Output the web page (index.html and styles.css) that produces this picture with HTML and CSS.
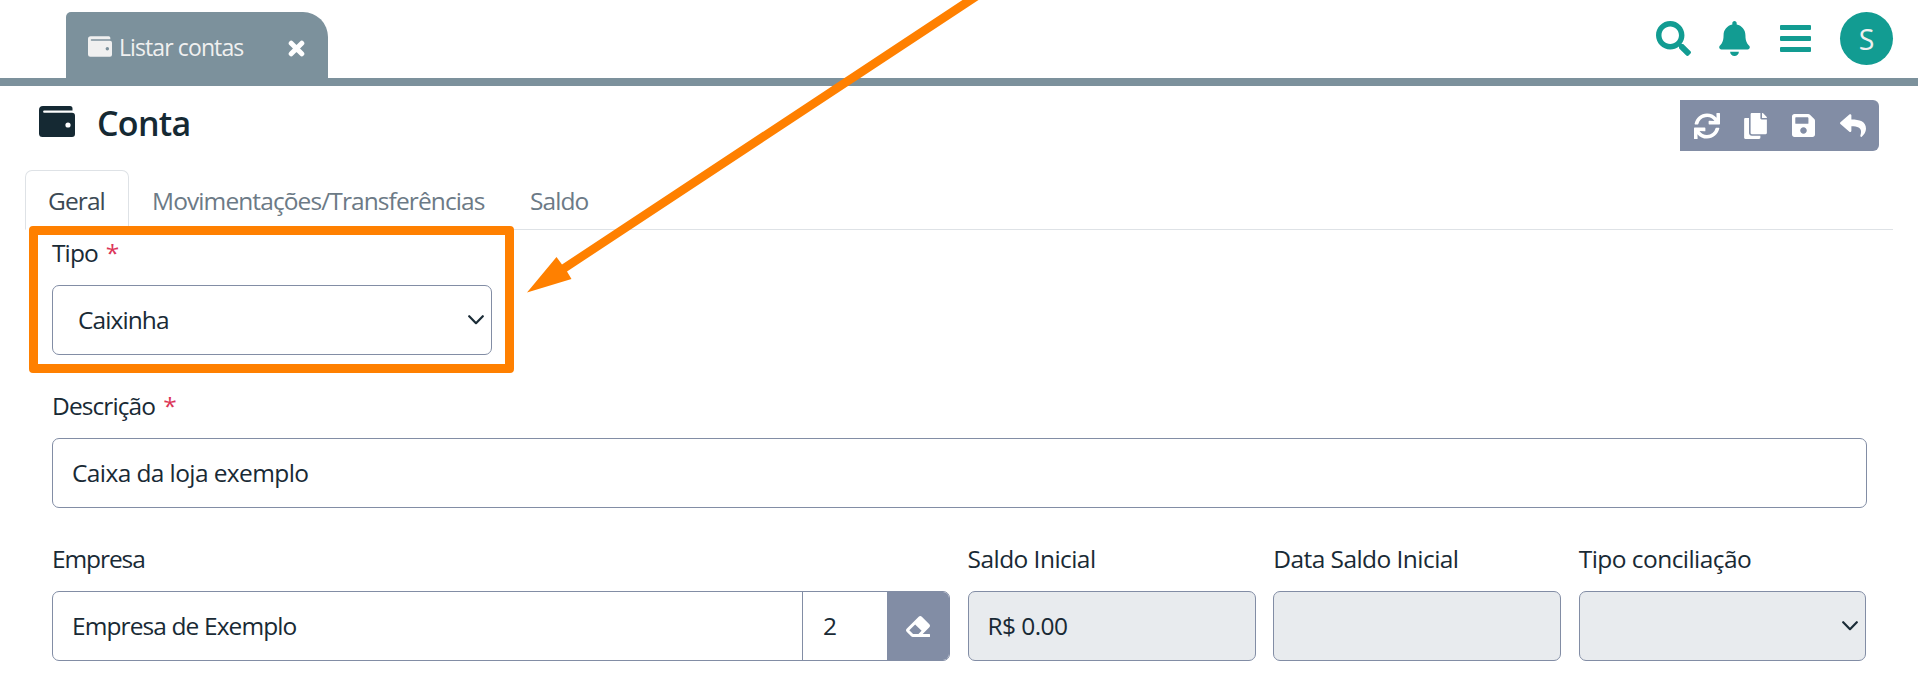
FILE: index.html
```html
<!DOCTYPE html>
<html lang="pt-BR">
<head>
<meta charset="utf-8">
<title>Conta</title>
<link rel="stylesheet" href="styles.css">
</head>
<body>
<svg class="sprite" width="0" height="0">
  <symbol id="wallet" viewBox="0 0 36 31"><path d="M4 0H31a2.500 2.500 0 0 1 2.500 2.500V4.600H5.200a.9.9 0 0 0 0 2.200H33a3 3 0 0 1 3 3V28a3 3 0 0 1-3 3H3.500A3.500 3.500 0 0 1 0 27.500V4A4 4 0 0 1 4 0zM29 16.400a2.600 2.600 0 1 0 0 5.200 2.600 2.600 0 0 0 0-5.200z"/></symbol>
  <symbol id="chevron" viewBox="0 0 16 10"><path d="M1.2 1.2 8 8.2l6.8-7" fill="none" stroke="#1b2c37" stroke-width="2.2" stroke-linecap="round" stroke-linejoin="round"/></symbol>
</svg>

<header class="topbar">
  <div class="page-tab">
    <svg class="page-tab-icon"><use href="#wallet"/></svg>
    <span class="page-tab-label">Listar contas</span>
    <svg class="page-tab-close" viewBox="0 0 17 17"><path d="M3.2 3.2 13.8 13.8M13.8 3.2 3.2 13.8" stroke="#fff" stroke-width="5" stroke-linecap="round"/></svg>
  </div>
  <div class="topbar-actions">
    <svg class="ico-search" viewBox="0 0 512 512"><path d="M505 442.7L405.3 343c-4.500-4.500-10.600-7-17-7H372c27.600-35.300 44-79.700 44-128C416 93.100 322.900 0 208 0S0 93.100 0 208s93.100 208 208 208c48.300 0 92.700-16.400 128-44v16.300c0 6.400 2.500 12.500 7 17l99.700 99.700c9.400 9.400 24.600 9.400 33.900 0l28.300-28.300c9.400-9.400 9.400-24.600.1-34zM208 336c-70.700 0-128-57.200-128-128 0-70.700 57.200-128 128-128 70.700 0 128 57.200 128 128 0 70.700-57.200 128-128 128z"/></svg>
    <svg class="ico-bell" viewBox="0 0 448 512"><path d="M224 512c35.320 0 63.970-28.650 63.970-64H160.030c0 35.350 28.650 64 63.970 64zm215.390-149.710c-19.320-20.760-55.470-51.990-55.470-154.290 0-77.700-54.480-139.900-127.940-155.160V32c0-17.670-14.320-32-31.980-32s-31.980 14.330-31.980 32v20.840C118.560 68.100 64.080 130.300 64.080 208c0 102.300-36.150 133.530-55.470 154.290-6 6.450-8.660 14.160-8.610 21.710.11 16.400 12.980 32 32.100 32h383.800c19.120 0 32-15.600 32.100-32 .05-7.550-2.610-15.270-8.610-21.710z"/></svg>
    <svg class="ico-bars" viewBox="0 0 31 27"><rect width="31" height="5" rx="1"/><rect y="11" width="31" height="5" rx="1"/><rect y="22" width="31" height="5" rx="1"/></svg>
    <div class="avatar">S</div>
  </div>
</header>

<section class="heading">
  <svg class="heading-icon"><use href="#wallet"/></svg>
  <h1>Conta</h1>
  <div class="toolbar">
    <svg class="ico-sync" viewBox="0 0 512 512"><path d="M440.65 12.570l4 82.770A247.160 247.160 0 0 0 255.830 8C134.730 8 33.910 94.920 12.290 209.820A12 12 0 0 0 24.090 224h49.050a12 12 0 0 0 11.670-9.260 175.910 175.910 0 0 1 317-56.940l-101.460-4.860a12 12 0 0 0-12.570 12v47.410a12 12 0 0 0 12 12H500a12 12 0 0 0 12-12V12a12 12 0 0 0-12-12h-47.370a12 12 0 0 0-11.980 12.570zM255.830 432a175.610 175.610 0 0 1-146-77.800l101.800 4.870a12 12 0 0 0 12.570-12v-47.400a12 12 0 0 0-12-12H12a12 12 0 0 0-12 12V500a12 12 0 0 0 12 12h47.350a12 12 0 0 0 12-12.600l-4.150-82.570A247.170 247.170 0 0 0 255.830 504c121.110 0 221.930-86.920 243.550-201.820a12 12 0 0 0-11.800-14.180h-49.050a12 12 0 0 0-11.670 9.260A175.860 175.860 0 0 1 255.830 432z"/></svg>
    <svg class="ico-copy" viewBox="0 0 448 512"><path d="M320 448v40c0 13.255-10.745 24-24 24H24c-13.255 0-24-10.745-24-24V120c0-13.255 10.745-24 24-24h72v296c0 30.879 25.121 56 56 56h168zm0-344V0H152c-13.255 0-24 10.745-24 24v368c0 13.255 10.745 24 24 24h272c13.255 0 24-10.745 24-24V128H344c-13.200 0-24-10.800-24-24zm120.971-31.029L375.029 7.029A24 24 0 0 0 358.059 0H352v96h96v-6.059a24 24 0 0 0-7.029-16.970z"/></svg>
    <svg class="ico-save" viewBox="0 32 448 448"><path d="M433.941 129.941l-83.882-83.882A48 48 0 0 0 316.118 32H48C21.490 32 0 53.490 0 80v352c0 26.510 21.490 48 48 48h352c26.510 0 48-21.490 48-48V163.882a48 48 0 0 0-14.059-33.941zM224 416c-35.346 0-64-28.654-64-64 0-35.346 28.654-64 64-64s64 28.654 64 64c0 35.346-28.654 64-64 64zm96-304.520V212c0 6.627-5.373 12-12 12H76c-6.627 0-12-5.373-12-12V108c0-6.627 5.373-12 12-12h228.520c3.183 0 6.235 1.264 8.485 3.515l3.480 3.480A11.996 11.996 0 0 1 320 111.480z"/></svg>
    <svg class="ico-reply" viewBox="0 32 512 448"><path d="M8.309 189.836L184.313 37.851C199.719 24.546 224 35.347 224 56.015v80.053c160.629 1.839 288 34.032 288 186.258 0 61.441-39.581 122.309-83.333 154.132-13.653 9.931-33.111-2.533-28.077-18.631 45.344-145.012-21.507-183.510-176.590-185.742V360c0 20.700-24.300 31.453-39.687 18.164l-176.004-152c-11.071-9.562-11.086-26.753 0-36.328z"/></svg>
  </div>
</section>

<nav class="tabs">
  <span class="tab tab-active">Geral</span>
  <span class="tab tab-movements">Movimentações/Transferências</span>
  <span class="tab">Saldo</span>
</nav>

<main class="form">
  <div class="field field-type">
    <label>Tipo <i>*</i></label>
    <div class="control select"><span>Caixinha</span><svg class="chevron"><use href="#chevron"/></svg></div>
  </div>
  <div class="field">
    <label>Descrição <i>*</i></label>
    <div class="control value-loose">Caixa da loja exemplo</div>
  </div>
  <div class="row">
    <div class="field">
      <label class="label-tight">Empresa</label>
      <div class="control group">
        <div class="group-name">Empresa de Exemplo</div>
        <div class="group-code">2</div>
        <div class="group-clear"><svg viewBox="0 32 512 448"><path d="M497.941 273.941c18.745-18.745 18.745-49.137 0-67.882l-160-160c-18.745-18.745-49.136-18.746-67.883 0l-256 256c-18.745 18.745-18.745 49.137 0 67.882l96 96A48.004 48.004 0 0 0 144 480h356c6.627 0 12-5.373 12-12v-40c0-6.627-5.373-12-12-12H355.883l142.058-142.059zm-302.627-62.627l137.373 137.373L265.373 416H150.628l-80-80 124.686-124.686z"/></svg></div>
      </div>
    </div>
    <div class="field">
      <label class="label-loose">Saldo Inicial</label>
      <div class="control disabled value-loose">R$ 0.00</div>
    </div>
    <div class="field">
      <label class="label-loose">Data Saldo Inicial</label>
      <div class="control disabled"></div>
    </div>
    <div class="field">
      <label class="label-loose">Tipo conciliação</label>
      <div class="control select disabled"><svg class="chevron"><use href="#chevron"/></svg></div>
    </div>
  </div>
</main>

<div class="highlight"></div>
<svg class="arrow" viewBox="0 0 1918 691"><path d="M527 292.500 556.500 257 562 264.500 962.500 0H978.500L567 271.500 571.500 279z"/></svg>
</body>
</html>
```
FILE: styles.css
```css
* { box-sizing: border-box; }
body {
  position: relative;
  margin: 0;
  height: 691px;
  overflow: hidden;
  background: #fff;
  color: #192a35;
  font: 24.5px/36px "Open Sans", "Noto Sans", sans-serif;
  letter-spacing: -0.9px;
  white-space: nowrap;
}
svg { display: block; flex: none; }
.sprite { position: absolute; }

.topbar {
  display: flex;
  justify-content: space-between;
  align-items: flex-start;
  height: 86px;
  padding: 12px 25px 0 66px;
  border-bottom: 8px solid #7c919c;
}
.page-tab {
  display: flex;
  align-items: center;
  width: 262px;
  height: 66px;
  padding: 4px 23px 0 22px;
  border-radius: 5px 25px 0 0;
  background: #7c919c;
  color: #f0f0f0;
  font-size: 23px;
}
.page-tab-icon { width: 24px; height: 21px; margin: 0 7px 2px 0; fill: #f0f0f0; }
.page-tab-close { width: 17px; height: 17px; margin: 3px 0 0 auto; }
.topbar-actions { display: flex; fill: #129c92; }
.ico-search { width: 35px; height: 35px; margin: 9px 28px 0 0; }
.ico-bell { width: 31px; height: 35px; margin: 9px 30px 0 0; }
.ico-bars { width: 31px; height: 27px; margin: 13px 29px 0 0; }
.avatar {
  width: 53px;
  height: 53px;
  border-radius: 50%;
  background: #129c92;
  color: #f0f0f0;
  font-size: 28.5px;
  line-height: 54px;
  letter-spacing: 0;
  text-align: center;
}

.heading { display: flex; height: 84px; padding: 14px 39px 0 39px; }
.heading-icon { width: 36px; height: 31px; margin: 6px 22px 0 0; fill: #152933; }
h1 { margin: 0; font-size: 34px; font-weight: 600; line-height: 46px; letter-spacing: -0.7px; color: #152933; }
.toolbar {
  display: flex;
  align-items: center;
  width: 199px;
  height: 51px;
  margin-left: auto;
  padding-left: 14px;
  border-radius: 0 6px 6px 0;
  background: #828da5;
  fill: #fff;
}
.ico-sync { width: 26px; height: 26px; margin-right: 24px; }
.ico-copy { width: 23px; height: 26px; margin-right: 25px; }
.ico-save { width: 23px; height: 23px; margin-right: 25px; }
.ico-reply { width: 26px; height: 23px; }

.tabs { display: flex; height: 60px; margin: 0 25px; border-bottom: 1px solid #dee2e6; color: #6c7a86; }
.tab { height: 60px; padding: 13px 23px 0; }
.tab-movements { width: 378px; }
.tab-active {
  width: 104px;
  padding: 12px 0 0 22px;
  border: 1px solid #dee2e6;
  border-bottom-color: #fff;
  border-radius: 7px 7px 0 0;
  color: #3c4954;
}

.form { display: grid; gap: 34px; padding: 5px 51px 0 52px; }
.field { display: grid; grid-template-rows: 50px 70px; }
.form { row-gap: 33px; }
label { display: flex; gap: 8px; }
label i { color: #dc3558; font-style: normal; }
.label-tight { letter-spacing: -1.1px; }
.label-loose { letter-spacing: -0.55px; }
.value-loose { letter-spacing: -0.6px; }
.field-type { width: 440px; }
.control {
  display: flex;
  align-items: center;
  height: 70px;
  padding: 0 19px;
  border: 1px solid #828da5;
  border-radius: 7px;
}
.select { padding: 0 7px 0 25px; }
.chevron { width: 16px; height: 10px; margin-left: auto; }
.disabled { background: #e8ebee; }
.row { display: grid; grid-template-columns: 898px 288px 288px 287px; column-gap: 17.6px; }
.group { align-items: stretch; padding: 0; overflow: hidden; line-height: 68px; }
.group-name { flex: 1; padding-left: 19px; border-right: 1px solid #828da5; }
.group-code { width: 84px; padding-left: 20px; }
.group-clear { display: grid; place-items: center; width: 62px; background: #828da5; }
.group-clear svg { width: 24px; height: 21px; fill: #fff; }

.highlight {
  position: absolute;
  left: 29px;
  top: 226px;
  width: 485px;
  height: 147px;
  border: 9px solid #ff8000;
  border-radius: 4px;
}
.arrow { position: absolute; left: 0; top: 0; width: 1918px; height: 691px; fill: #ff8000; }
```
